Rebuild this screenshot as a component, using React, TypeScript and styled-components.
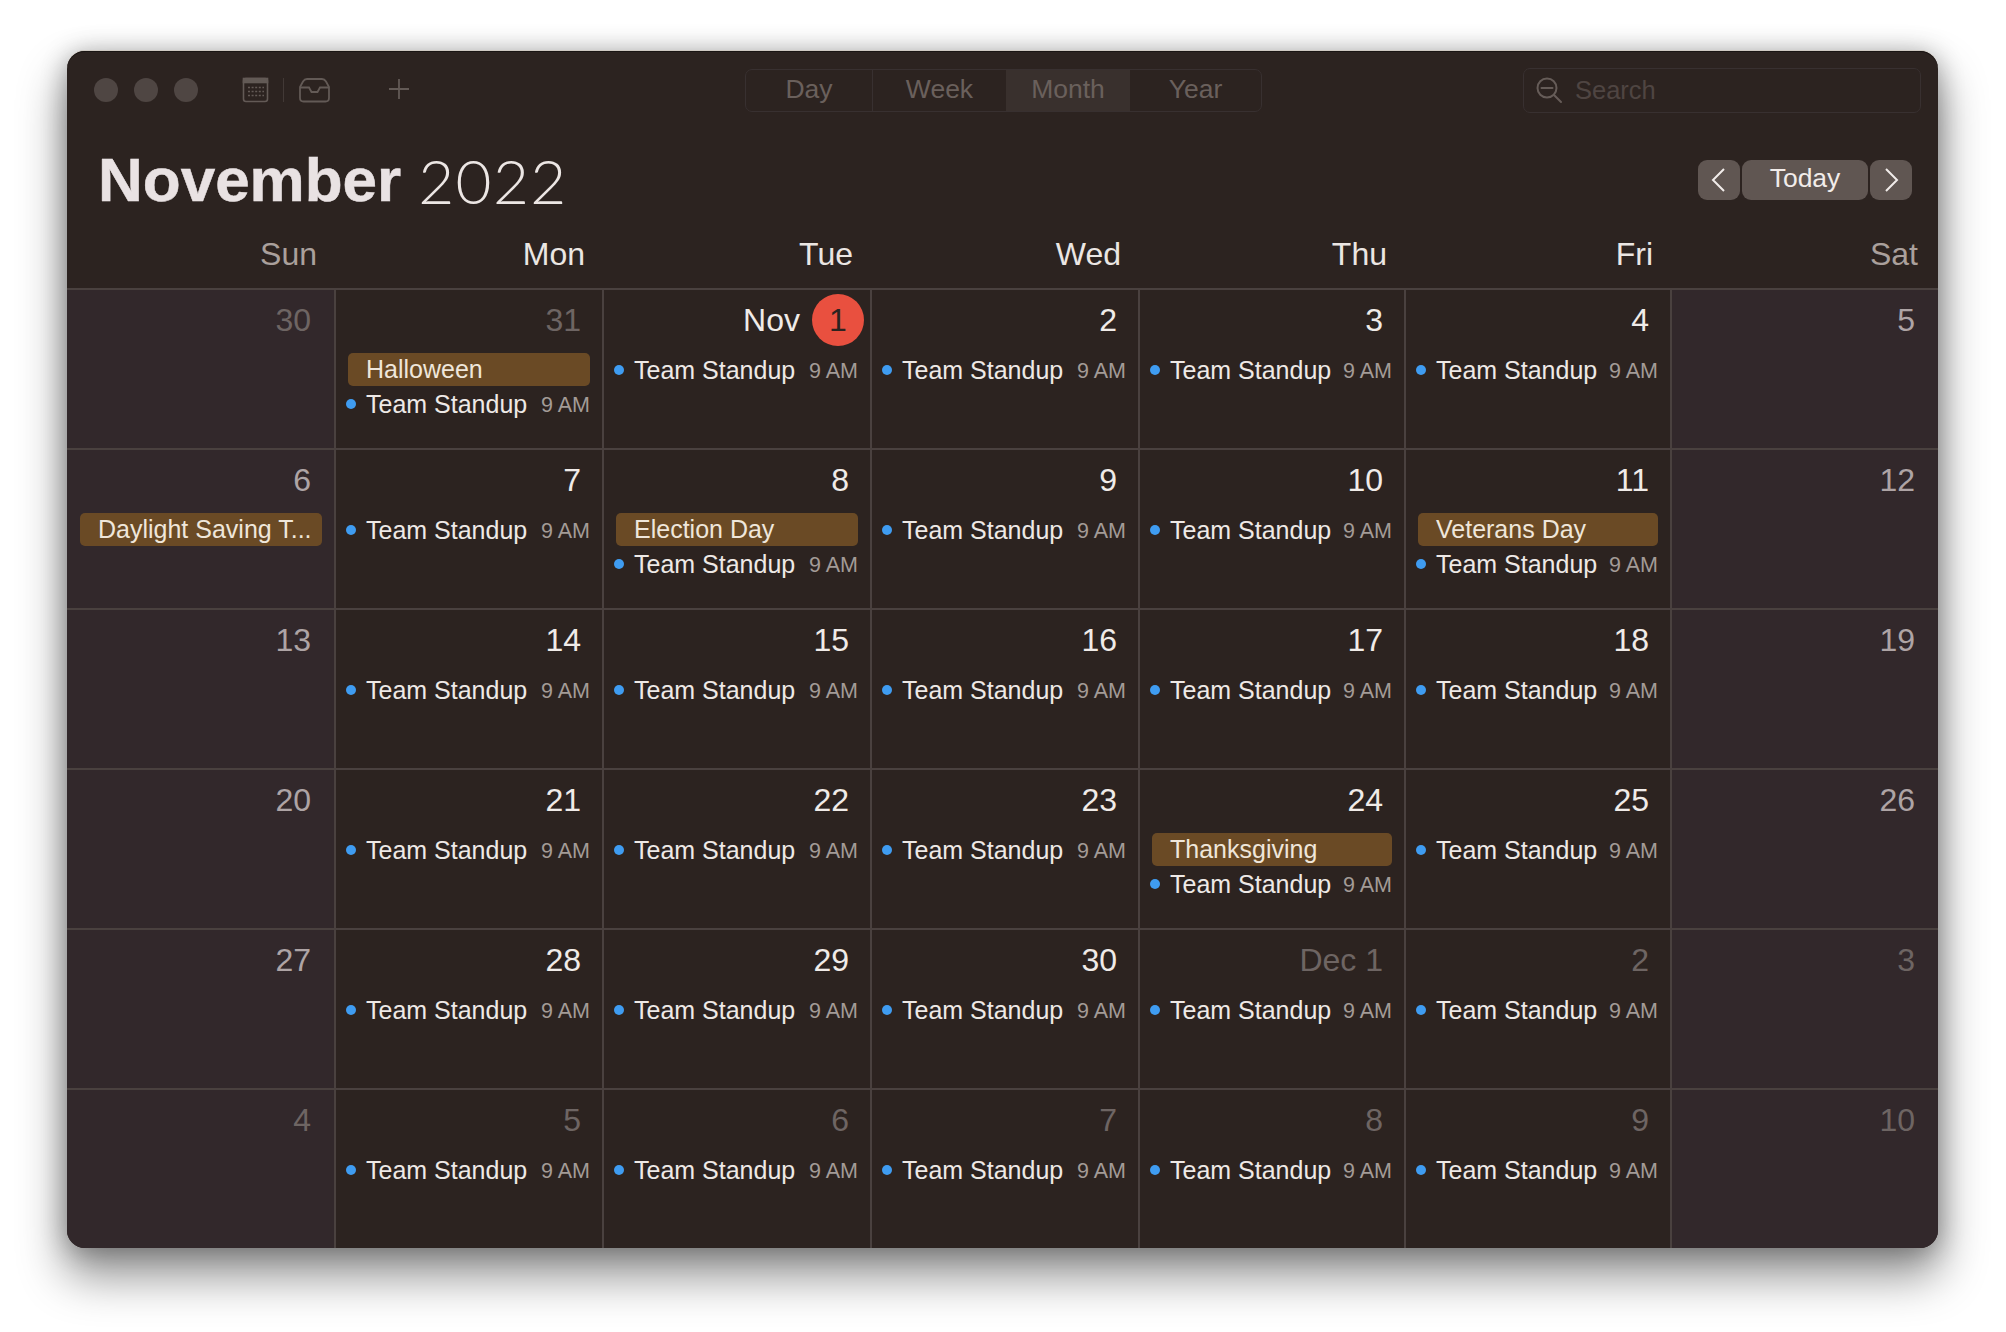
import React from "react";
import styled, { createGlobalStyle } from "styled-components";

const Global = createGlobalStyle`
  html, body { margin: 0; padding: 0; background: #fff; }
  body { font-family: "Liberation Sans", Arial, sans-serif; -webkit-font-smoothing: antialiased; }
`;

const Page = styled.div`
  width: 2006px;
  height: 1332px;
  padding: 51px 0 0 67px;
  box-sizing: border-box;
  overflow: hidden;
`;

const Window = styled.div`
  width: 1871px;
  height: 1197px;
  background: #2c2320;
  border-radius: 18px;
  overflow: hidden;
  display: flex;
  flex-direction: column;
  box-shadow: inset 0 1px 0 #1a1513, 0 -1px 0 #cfc9c2, 0 26px 46px 3px rgba(0, 0, 0, 0.42), 0 2px 26px rgba(0, 0, 0, 0.3);
`;

const Toolbar = styled.div`
  height: 78px;
  flex: none;
  padding: 0 17px 0 27px;
  display: grid;
  grid-template-columns: 651px 517px 1fr;
  align-items: center;
`;

const LeftTools = styled.div`
  display: flex;
  align-items: center;
`;

const Light = styled.span`
  width: 24px;
  height: 24px;
  border-radius: 50%;
  background: #4f4643;
  margin-right: 16px;
`;

const ToolSep = styled.span`
  width: 1px;
  height: 24px;
  background: #423936;
  margin: 0 14px;
`;

const ToolIcon = styled.svg<{ $ml?: number }>`
  display: block;
  flex: none;
  margin-left: ${(p) => p.$ml ?? 0}px;
  color: #635a56;
`;

const Segment = styled.div`
  height: 43px;
  box-sizing: border-box;
  border: 1px solid #383030;
  border-radius: 7px;
  display: grid;
  grid-template-columns: 126px 134px 124px 1fr;
  overflow: hidden;
`;

const Tab = styled.div<{ $active?: boolean; $sep?: boolean }>`
  display: flex;
  align-items: center;
  justify-content: center;
  font-size: 26.5px;
  padding-bottom: 2px;
  color: #6a605c;
  background: ${(p) => (p.$active ? "#39302d" : "transparent")};
  border-left: ${(p) => (p.$sep ? "1px solid #383030" : "none")};
`;

const SearchBox = styled.div`
  justify-self: end;
  width: 398px;
  height: 45px;
  box-sizing: border-box;
  border: 1px solid #383030;
  border-radius: 7px;
  display: flex;
  align-items: center;
  padding-left: 11px;
  gap: 12px;
  font-size: 25.5px;
  color: #4f4542;
`;

const TitleRow = styled.div`
  height: 102px;
  flex: none;
  padding: 0 26px 0 31px;
  display: flex;
  align-items: center;
  justify-content: space-between;
`;

const Title = styled.h1`
  margin: 0;
  font-size: 62px;
  font-weight: 700;
  color: #e9e2e3;
  line-height: 72px;
  display: flex;
  gap: 17px;
  -webkit-text-stroke: 0.5px #e9e2e3;
`;

const TitleYear = styled.span`
  font-family: Lato, sans-serif;
  font-weight: 300;
  letter-spacing: 1.4px;
  color: #ece6e4;
  -webkit-text-stroke: 0;
`;

const Nav = styled.div`
  display: flex;
  gap: 2px;
`;

const NavButton = styled.div<{ $wide?: boolean }>`
  width: ${(p) => (p.$wide ? 126 : 42)}px;
  height: 40px;
  padding-bottom: ${(p) => (p.$wide ? 3 : 0)}px;
  box-sizing: border-box;
  background: #605652;
  border-radius: 9px;
  display: flex;
  align-items: center;
  justify-content: center;
  font-size: 26.5px;
  color: #f1ecea;
`;

const columns = "267px 268px 268px 268px 266px 266px 268px";

const WeekHeader = styled.div`
  height: 57px;
  flex: none;
  display: grid;
  grid-template-columns: ${columns};
  box-sizing: border-box;
`;

const DayName = styled.div<{ $weekend?: boolean }>`
  text-align: right;
  font-size: 32px;
  line-height: 36px;
  padding: 5px 17px 0 0;
  color: ${(p) => (p.$weekend ? "#aaa09c" : "#ebe6e3")};

  &:last-child {
    padding-right: 20px;
  }
`;

const Grid = styled.div`
  display: grid;
  grid-template-columns: ${columns};
  grid-auto-rows: 160px;
  flex: 1;
`;

const Cell = styled.div<{ $weekend?: boolean; $first?: boolean }>`
  background: ${(p) => (p.$weekend ? "#32282b" : "#2c2320")};
  border-top: 2px solid #4a413f;
  border-left: ${(p) => (p.$first ? "none" : "2px solid #4a413f")};
  box-sizing: border-box;
  min-width: 0;
  padding: 3px 12px 0 ${(p) => (p.$first ? 11 : 10)}px;
`;

const DateRow = styled.div`
  height: 54px;
  margin-bottom: 6px;
  display: flex;
  align-items: center;
  justify-content: flex-end;
`;

const DateNum = styled.span<{ $tone: "main" | "weekend" | "dim"; $edge?: boolean }>`
  font-size: 32px;
  padding-right: ${(p) => (p.$edge ? 11 : 9)}px;
  color: ${(p) => (p.$tone === "main" ? "#f0ebe8" : p.$tone === "weekend" ? "#aea4a5" : "#6e6563")};
`;

const TodayWrap = styled.span`
  display: flex;
  align-items: center;
  gap: 12px;
  font-size: 32px;
  color: #f0ebe8;
  margin-right: -6px;
`;

const TodayBadge = styled.span`
  width: 52px;
  height: 52px;
  border-radius: 50%;
  background: #e9503f;
  color: #2c2320;
  display: flex;
  align-items: center;
  justify-content: center;
`;

const AllDay = styled.div`
  height: 33px;
  margin: 0 0 1px 2px;
  padding: 0 0 0 18px;
  background: #6a4a25;
  border-radius: 5px;
  display: flex;
  align-items: center;
  font-size: 25px;
  color: #efe6da;
  white-space: nowrap;
`;

const EventRow = styled.div`
  height: 34px;
  display: flex;
  align-items: center;
  font-size: 25px;
  color: #eee9e6;
  white-space: nowrap;
`;

const Dot = styled.span`
  width: 10px;
  height: 10px;
  border-radius: 50%;
  background: #3f9cf1;
  margin-right: 10px;
  flex: none;
`;

const EventTime = styled.span`
  margin-left: auto;
  padding-top: 2px;
  font-size: 21.5px;
  color: #a39b97;
`;

type Day = { label: string; tone: "main" | "weekend" | "dim"; bar?: string; today?: boolean };

const d = (label: string, tone: Day["tone"] = "main", bar?: string): Day => ({ label, tone, bar });

const weeks: Day[][] = [
  [d("30", "dim"), d("31", "dim", "Halloween"), { label: "1", tone: "main", today: true }, d("2"), d("3"), d("4"), d("5", "weekend")],
  [d("6", "weekend", "Daylight Saving T..."), d("7"), d("8", "main", "Election Day"), d("9"), d("10"), d("11", "main", "Veterans Day"), d("12", "weekend")],
  [d("13", "weekend"), d("14"), d("15"), d("16"), d("17"), d("18"), d("19", "weekend")],
  [d("20", "weekend"), d("21"), d("22"), d("23"), d("24", "main", "Thanksgiving"), d("25"), d("26", "weekend")],
  [d("27", "weekend"), d("28"), d("29"), d("30"), d("Dec 1", "dim"), d("2", "dim"), d("3", "dim")],
  [d("4", "dim"), d("5", "dim"), d("6", "dim"), d("7", "dim"), d("8", "dim"), d("9", "dim"), d("10", "dim")],
];

const dayNames = ["Sun", "Mon", "Tue", "Wed", "Thu", "Fri", "Sat"];

const CalendarIcon = () => (
  <ToolIcon $ml={28} width="27" height="26" viewBox="0 0 27 26" fill="none" stroke="currentColor" strokeWidth="1.6">
    <rect x="1.5" y="1.5" width="24" height="23" rx="2.5" />
    <rect x="1.5" y="1.5" width="24" height="4" fill="currentColor" />
    <g strokeWidth="1.4" strokeDasharray="2 1.6">
      <path d="M6 10.500h16M6 14.500h16M6 18.500h16" />
    </g>
  </ToolIcon>
);

const InboxIcon = () => (
  <ToolIcon width="33" height="26" viewBox="0 0 33 26" fill="none" stroke="currentColor" strokeWidth="1.8">
    <path d="M9 2h15c2 0 3 .8 4 2.500l3 5.500v11c0 2.200-1.300 3.500-3.500 3.500h-22C3.300 24.500 2 23.200 2 21V10l3-5.500C6 2.800 7 2 9 2z" />
    <path d="M2 10.500h9l2.500 4.500h6l2.500-4.500h9" />
  </ToolIcon>
);

const PlusIcon = () => (
  <ToolIcon $ml={57} width="22" height="24" viewBox="0 0 22 24" fill="none" stroke="currentColor" strokeWidth="1.8">
    <path d="M11 1v20M1 11h20" />
  </ToolIcon>
);

const SearchIcon = () => (
  <svg width="28" height="28" viewBox="0 0 28 28" fill="none" stroke="#665c58" strokeWidth="2">
    <circle cx="12" cy="12" r="9.500" />
    <path d="M19 19l7 7M6.500 12h11" strokeWidth="2" strokeLinecap="round" />
  </svg>
);

const Chevron = ({ left }: { left?: boolean }) => (
  <svg width="16" height="26" viewBox="0 0 16 26" fill="none" stroke="#f1ecea" strokeWidth="2">
    <path d={left ? "M13 2L2 13l11 11" : "M3 2l11 11L3 24"} />
  </svg>
);

export default function App() {
  return (
    <Page>
      <Global />
      <Window>
        <Toolbar>
          <LeftTools>
            <Light />
            <Light />
            <Light />
            <CalendarIcon />
            <ToolSep />
            <InboxIcon />
            <PlusIcon />
          </LeftTools>
          <Segment>
            <Tab>Day</Tab>
            <Tab $sep>Week</Tab>
            <Tab $active>Month</Tab>
            <Tab>Year</Tab>
          </Segment>
          <SearchBox>
            <SearchIcon />
            Search
          </SearchBox>
        </Toolbar>
        <TitleRow>
          <Title>
            November <TitleYear>2022</TitleYear>
          </Title>
          <Nav>
            <NavButton>
              <Chevron left />
            </NavButton>
            <NavButton $wide>Today</NavButton>
            <NavButton>
              <Chevron />
            </NavButton>
          </Nav>
        </TitleRow>
        <WeekHeader>
          {dayNames.map((n, i) => (
            <DayName key={n} $weekend={i === 0 || i === 6}>
              {n}
            </DayName>
          ))}
        </WeekHeader>
        <Grid>
          {weeks.flatMap((week, w) =>
            week.map((day, i) => {
              const weekend = i === 0 || i === 6;
              return (
                <Cell key={`${w}-${i}`} $weekend={weekend} $first={i === 0}>
                  <DateRow>
                    {day.today ? (
                      <TodayWrap>
                        Nov <TodayBadge>{day.label}</TodayBadge>
                      </TodayWrap>
                    ) : (
                      <DateNum $tone={day.tone} $edge={weekend}>
                        {day.label}
                      </DateNum>
                    )}
                  </DateRow>
                  {day.bar && <AllDay>{day.bar}</AllDay>}
                  {!weekend && (
                    <EventRow>
                      <Dot />
                      Team Standup
                      <EventTime>9 AM</EventTime>
                    </EventRow>
                  )}
                </Cell>
              );
            }),
          )}
        </Grid>
      </Window>
    </Page>
  );
}
